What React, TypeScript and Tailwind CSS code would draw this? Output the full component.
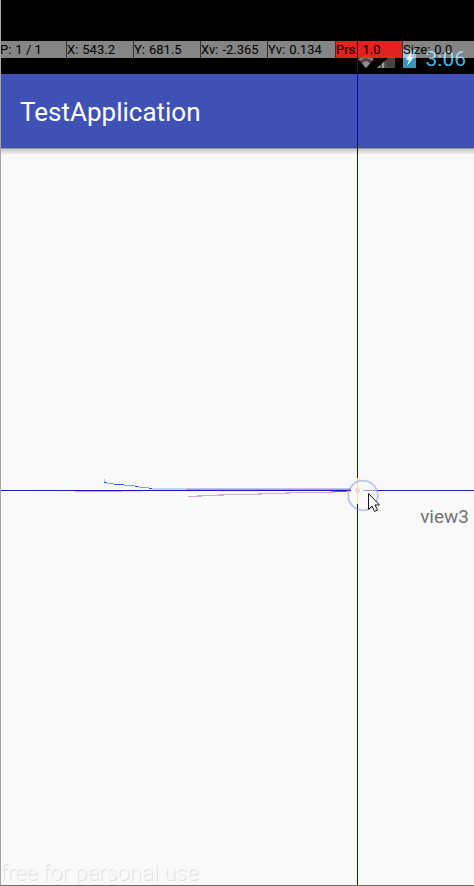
const readings = [
  { label: "P", value: "1 / 1" },
  { label: "X", value: "543.2" },
  { label: "Y", value: "681.5" },
  { label: "Xv", value: "-2.365" },
  { label: "Yv", value: "0.134" },
  { label: "Prs", value: "1.0", active: true },
  { label: "Size", value: "0.0" },
];

function StatusIcons() {
  return (
    <svg width="60" height="22" viewBox="0 0 60 22" aria-hidden="true">
      {/* Wifi */}
      <path d="M0 9 Q8 1 16 9 L8 18 Z" fill="#4a4a4a" />
      <path d="M1 10 Q8 4 15 10" fill="none" stroke="#8a8a8a" strokeWidth="2" />
      <path d="M4 13.5 Q8 9 12 13.5 L8 18 Z" fill="#8f8f8f" />
      {/* Signal */}
      <path d="M37 2 V18 H19 Z" fill="#444" />
      <path d="M28 10 V18 H19 Z" fill="#9a9a9a" />
      <path d="M23 8 V18 M27 6 V18" stroke="#111" strokeWidth="1" />
      <path d="M29 5 H37 V18 H29 Z" fill="#444" />
      {/* Battery */}
      <path d="M45 0 H58 V18 H45 Z" fill="#3597bd" />
      <path d="M53 2 L48 10 H51 L49 16 L56 7 H52 L55 2 Z" fill="#e8f6fb" />
    </svg>
  );
}

function PointerBar() {
  return (
    <dl className="absolute inset-x-0 top-[41px] grid h-[17px] grid-cols-[66fr_67fr_67fr_67fr_68fr_67fr_72fr] text-[13px] leading-[17px] text-black">
      {readings.map((item) => (
        <div
          key={item.label}
          className={`flex gap-1 border-l border-[#333] whitespace-nowrap first:border-l-0 ${
            item.active ? "bg-[#f32424]/93" : "bg-white/52"
          }`}
        >
          <dt>{item.label}:</dt>
          <dd>{item.value}</dd>
        </div>
      ))}
    </dl>
  );
}

function TouchOverlay() {
  return (
    <svg className="pointer-events-none absolute inset-0 size-full" aria-hidden="true">
      {/* Gesture trails */}
      <g fill="none" shapeRendering="crispEdges">
        <path d="M104.5 479 V482" stroke="#8fd0ee" />
        <path d="M104 482.5 H107 M114 484.5 H124 M135 486.5 H139 M149 488.5 H153" stroke="#1a62dc" />
        <path d="M107 483.5 H114 M124 485.5 H135 M139 487.5 H149" stroke="#72aaf0" />
        <path d="M152 489 H250" stroke="#c3d3f3" strokeWidth="2" />
        <path d="M186 488.5 H351" stroke="#c3c3ea" />
        <path d="M186 489.5 H351" stroke="#a29cdd" />
        <path d="M75 491.5 H122" stroke="#d2a4d4" />
        <path d="M122 491.5 H142" stroke="#eadcf0" />
        <path d="M188 496.5 H202 M197 495.5 H224 M218 494.5 H262 M258 493.5 H290 M286 492.5 H334 M330 491.5 H348" stroke="#d4abd4" />
      </g>

      {/* Crosshair */}
      <g shapeRendering="crispEdges">
        <line x1="0" y1="490.5" x2="351" y2="490.5" stroke="#1b1bb8" />
        <line x1="363" y1="490.5" x2="377" y2="490.5" stroke="#9999dc" />
        <line x1="377" y1="490.5" x2="100%" y2="490.5" stroke="#2424bd" />
        <line x1="333" y1="491.5" x2="346" y2="491.5" stroke="#d2289a" />
        <line x1="357.5" y1="41" x2="357.5" y2="478" stroke="#0a0a9e" />
        <line x1="357.5" y1="478" x2="357.5" y2="504" stroke="#f0dfae" />
        <line x1="357.5" y1="504" x2="357.5" y2="100%" stroke="#0a0a9e" />
      </g>
      <circle cx="357.5" cy="490.5" r="1.8" fill="#f6e6e2" stroke="#dfbdb9" />
      <circle cx="363" cy="495.5" r="14.8" fill="none" stroke="#7088dd" strokeOpacity="0.45" strokeWidth="1.8" />

      {/* Mouse pointer */}
      <path
        d="M368.5 493.5 V509.5 L372 506 L374.5 511.5 L377.5 510 L375 505 H379.5 Z"
        fill="#fff"
        stroke="#161622"
      />
    </svg>
  );
}

export default function App() {
  return (
    <div className="relative flex min-h-screen flex-col overflow-hidden bg-[#f9f9f9] font-['Roboto',sans-serif]">
      <div className="flex h-[74px] items-end justify-end bg-black pr-2 pb-[2px]">
        <StatusIcons />
        <time className="ml-2 text-[21px] leading-[26px] text-[#45b5e3]">3:06</time>
      </div>

      <header className="flex h-[74px] items-center border-b border-[#3949ab] bg-[#3f51b5] px-5 pt-[2px]">
        <h1 className="text-[26px] leading-8 text-white">TestApplication</h1>
      </header>
      <div className="h-[6px] border-t border-[#999] bg-linear-to-b from-[#c9c9c9] to-[#eeeeee]" />

      <main className="flex flex-1 flex-col justify-between">
        <p className="pt-[350px] pr-[5px] text-right text-[19px] leading-[26px] text-[#737373]">view3</p>
        <p className="text-[22px] leading-[26px] font-light text-[#f9f9f9] [text-shadow:1px_1px_0_#dcdcdc]">
          free for personal use
        </p>
      </main>

      <PointerBar />
      <TouchOverlay />
      <div className="pointer-events-none absolute inset-0 border-b border-l border-b-[#6b6b6b] border-l-[#a5a5a5]" />
    </div>
  );
}
